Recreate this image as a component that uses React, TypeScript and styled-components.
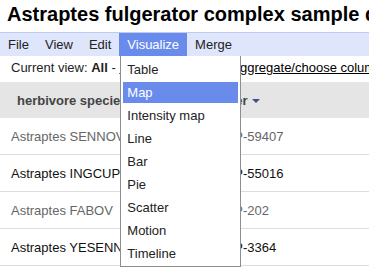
import React from 'react';
import styled, {createGlobalStyle} from 'styled-components';

const GlobalStyle = createGlobalStyle`
  body {
    margin: 0;
    font-family: "Liberation Sans", Arial, sans-serif;
    background: #ffffff;
    color: #222;
    overflow: hidden;
  }
`;

const menuItems = ['Table', 'Map', 'Intensity map', 'Line', 'Bar', 'Pie', 'Scatter', 'Motion', 'Timeline'];

const rows = [
    {name: 'Astraptes SENNOV', voucher: '02-SRNP-59407', dim: true},
    {name: 'Astraptes INGCUP', voucher: '02-SRNP-55016', dim: false},
    {name: 'Astraptes FABOV', voucher: '02-SRNP-202', dim: true},
    {name: 'Astraptes YESENN', voucher: '02-SRNP-3364', dim: false},
];

const App = () => {
    return (
        <Page>
            <GlobalStyle/>
            <Title>Astraptes fulgerator complex sample data</Title>
            <MenuBar>
                <MenuButton>File</MenuButton>
                <MenuButton>View</MenuButton>
                <MenuButton>Edit</MenuButton>
                <MenuButton $open>
                    Visualize
                    <Dropdown>
                        {menuItems.map(item => (
                            <DropdownItem key={item} $active={item === 'Map'}>{item}</DropdownItem>
                        ))}
                    </Dropdown>
                </MenuButton>
                <MenuButton>Merge</MenuButton>
            </MenuBar>
            <ViewLine>
                Current view: <b>All</b> - <ViewLink>Summarize, filter &amp; aggregate/choose columns</ViewLink>
            </ViewLine>
            <Table>
                <HeaderRow>
                    <HeaderCell>herbivore species</HeaderCell>
                    <HeaderCell>
                        voucher <SortArrow/>
                    </HeaderCell>
                </HeaderRow>
                {rows.map(row => (
                    <Row key={row.name}>
                        <Cell $dim={row.dim}>{row.name}</Cell>
                        <Cell $dim={row.dim}>{row.voucher}</Cell>
                    </Row>
                ))}
            </Table>
        </Page>
    );
};

export default App;

const Page = styled.div`
  width: 369px;
  height: 277px;
  overflow: hidden;
`;

const Title = styled.h1`
  margin: 0;
  padding-left: 7px;
  height: 32px;
  line-height: 29px;
  font-size: 20px;
  font-weight: 700;
  color: #000;
  white-space: nowrap;
`;

const MenuBar = styled.div`
  display: flex;
  height: 23px;
  border-top: 1px solid #bccbf3;
  background: #dfe6fb;
  font-size: 13px;
`;

const MenuButton = styled.div<{ $open?: boolean }>`
  position: relative;
  padding: 0 8px;
  line-height: 23px;
  color: ${p => (p.$open ? '#fff' : '#222')};
  background: ${p => (p.$open ? '#698bec' : 'transparent')};
`;

const Dropdown = styled.div`
  position: absolute;
  top: 100%;
  left: 1px;
  z-index: 10;
  width: 115px;
  padding: 3px 2px 0;
  background: #fff;
  border: 1px solid #8e8e8e;
  border-top: none;
`;

const DropdownItem = styled.div<{ $active?: boolean }>`
  height: 21px;
  margin-bottom: 2px;
  padding-left: 4px;
  line-height: 21px;
  font-size: 13px;
  white-space: nowrap;
  color: ${p => (p.$active ? '#fff' : '#222')};
  background: ${p => (p.$active ? '#698bec' : 'transparent')};
`;

const ViewLine = styled.div`
  height: 24px;
  padding: 0 0 2px 11px;
  line-height: 24px;
  font-size: 13px;
  color: #222;
  white-space: nowrap;
`;

const ViewLink = styled.span`
  color: #000;
  text-decoration: underline;
`;

const Table = styled.div`
  display: grid;
  grid-template-columns: 188px 1fr;
`;

const HeaderRow = styled.div`
  display: contents;
`;

const HeaderCell = styled.div`
  display: flex;
  align-items: center;
  gap: 4px;
  height: 36px;
  padding-left: 17px;
  padding-top: 1px;
  box-sizing: border-box;
  background: #e5e5e5;
  font-size: 13px;
  font-weight: 700;
  color: #444;
  white-space: nowrap;

  & + & {
    padding-left: 9px;
  }
`;

const SortArrow = styled.span`
  width: 0;
  height: 0;
  margin-top: 1px;
  border-left: 4px solid transparent;
  border-right: 4px solid transparent;
  border-top: 4px solid #3b4f8c;
`;

const Row = styled.div`
  display: contents;
`;

const Cell = styled.div<{ $dim?: boolean }>`
  height: 37px;
  box-sizing: border-box;
  padding: 2px 0 0 11px;
  line-height: 34px;
  border-bottom: 1px solid #dddddd;
  font-size: 13px;
  color: ${p => (p.$dim ? '#666' : '#111')};
  white-space: nowrap;
  overflow: hidden;

  & + & {
    padding-left: 0;
  }
`;
